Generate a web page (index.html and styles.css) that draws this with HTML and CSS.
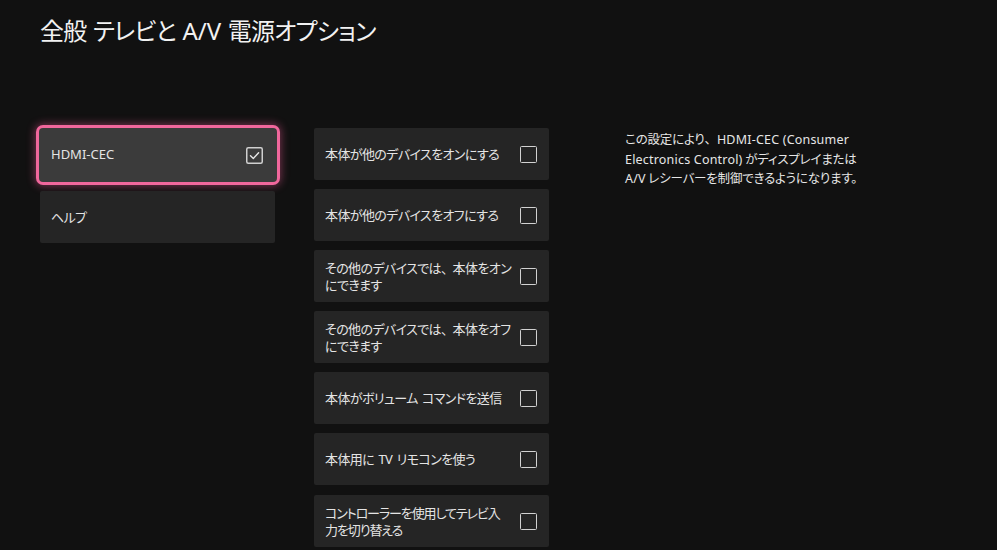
FILE: index.html
```html
<!DOCTYPE html>
<html lang="ja">
<head>
<meta charset="utf-8">
<link rel="stylesheet" href="styles.css">
</head>
<body>
<div class="page">
  <h1 class="title">全般 テレビと <span class="en">A/V</span> 電源オプション</h1>
  <div class="main">
    <div class="col left">
      <div class="card selected">
        <span class="label en">HDMI-CEC</span>
        <svg class="cb" width="17" height="17" viewBox="0 0 17 17"><rect x="0.75" y="0.75" width="15.5" height="15.5" rx="1.5" fill="none" stroke="#d0d0d0" stroke-width="1.5"/><polyline points="4.5,8.8 7.3,11.4 12.6,5.8" fill="none" stroke="#e8e8e8" stroke-width="1.4" stroke-linecap="round" stroke-linejoin="round"/></svg>
      </div>
      <div class="card">
        <span class="label">ヘルプ</span>
      </div>
    </div>
    <div class="col mid">
      <div class="card"><span class="label">本体が他のデバイスをオンにする</span><span class="box"></span></div>
      <div class="card"><span class="label">本体が他のデバイスをオフにする</span><span class="box"></span></div>
      <div class="card"><span class="label">その他のデバイスでは<span class="fw">、</span>本体をオン<br>にできます</span><span class="box"></span></div>
      <div class="card"><span class="label">その他のデバイスでは<span class="fw">、</span>本体をオフ<br>にできます</span><span class="box"></span></div>
      <div class="card"><span class="label">本体がボリューム コマンドを送信</span><span class="box"></span></div>
      <div class="card"><span class="label">本体用に <span class="en">TV</span> リモコンを使う</span><span class="box"></span></div>
      <div class="card"><span class="label long">コントローラーを使用してテレビ入<br>力を切り替える</span><span class="box"></span></div>
    </div>
    <div class="desc">この設定により<span class="fw">、</span><span class="en">HDMI-CEC (Consumer</span><br><span class="en">Electronics Control)</span> がディスプレイまたは<br><span class="en">A/V</span> レシーバーを制御できるようになります。</div>
  </div>
</div>
</body>
</html>
```
FILE: styles.css
```css
html, body {
  margin: 0;
  padding: 0;
  background: #111111;
  height: 100%;
  overflow: hidden;
}
body {
  font-family: "Noto Sans CJK JP", "Noto Sans", sans-serif;
  font-feature-settings: "palt";
  color: #ececec;
}
.en {
  font-family: "Noto Sans", "Noto Sans CJK JP", sans-serif;
  font-feature-settings: normal;
}
.fw {
  font-feature-settings: normal;
}
.page {
  padding: 15px 0 0 40px;
}
.title {
  margin: 0;
  font-size: 24px;
  font-weight: 400;
  line-height: 30px;
  letter-spacing: -0.8px;
  word-spacing: 2px;
  color: #f2f2f2;
  white-space: nowrap;
}
.title .en {
  letter-spacing: 0;
}
.main {
  display: flex;
  align-items: flex-start;
  margin-top: 82px;
}
.col {
  display: flex;
  flex-direction: column;
  gap: 9px;
  width: 235px;
}
.left {
  margin-top: 1px;
}
.mid {
  margin-left: 39px;
}
.mid .card:last-child {
  margin-top: 1px;
}
.card {
  height: 52px;
  box-sizing: border-box;
  background: #252525;
  border-radius: 2px;
  display: flex;
  align-items: center;
  justify-content: space-between;
  padding: 0 12px 0 11px;
}
.label {
  font-size: 13px;
  line-height: 17.5px;
  letter-spacing: -0.6px;
  word-spacing: 2px;
  color: #e4e4e4;
  white-space: nowrap;
}
.label.long {
  letter-spacing: -1.1px;
}
.label .fw {
  letter-spacing: -1.5px;
}
.label.en {
  letter-spacing: 0;
}
.selected {
  background: #3b3b3b;
  margin: -1px -2px 0 -1px;
  height: 54px;
  padding: 0 14px 0 12px;
  border-radius: 4px;
  box-shadow: 0 0 0 3px #f0679c, 0 0 9px 4px rgba(240, 90, 150, 0.45);
}
.box {
  width: 17px;
  height: 17px;
  box-sizing: border-box;
  border: 1.5px solid #d2d2d2;
  border-radius: 1.5px;
  flex: none;
  margin-left: 6px;
}
.cb {
  flex: none;
  display: block;
}
.desc {
  margin-left: 76px;
  margin-top: 2px;
  font-size: 12.5px;
  line-height: 18.5px;
  letter-spacing: -0.2px;
  color: #e6e6e6;
  white-space: nowrap;
}
.desc .en {
  letter-spacing: 0.2px;
}
```
